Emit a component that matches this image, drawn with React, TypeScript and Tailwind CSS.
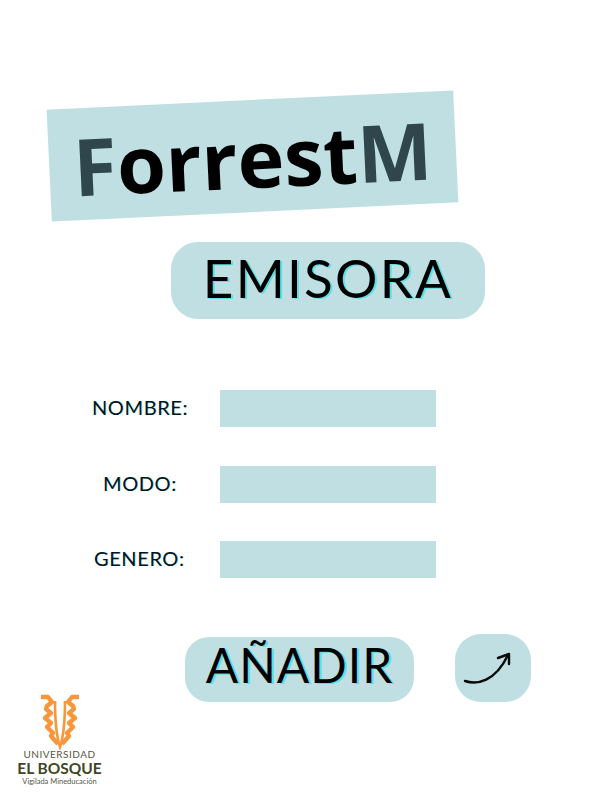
const sans = "font-['Lato','Liberation_Sans',sans-serif]";

function Field({ label, offset }: { label: string; offset: string }) {
  return (
    <div className="flex items-center">
      <div className={`w-[220px] pb-[4px] text-[20px] leading-none tracking-[0.6px] text-[#04141c] [text-shadow:0.5px_0_0_#7fe3e8] ${offset} ${sans}`}>
        {label}
      </div>
      <div className="h-[37px] w-[216px] bg-[#bfdfe2]" />
    </div>
  );
}

function Logo() {
  return (
    <div className="ml-[17px] -mt-[8px] flex w-[85px] flex-col items-center">
      <svg width="44" height="56" viewBox="0 0 44 56" fill="none">
        <path d="M17 7 C17 28 19 44 22 53 C25 44 27 28 27 7" stroke="#f7963a" strokeWidth="2.6" />
        <path d="M3 3 L10 3 L14 8 L9 12 L8 15 L13 19 L7 24 L13 29 L9 33 L15 39 L13 42 L20 50" stroke="#f7963a" strokeWidth="4.4" strokeLinejoin="round" />
        <path d="M41 3 L34 3 L30 8 L35 12 L36 15 L31 19 L37 24 L31 29 L35 33 L29 39 L31 42 L24 50" stroke="#f7963a" strokeWidth="4.4" strokeLinejoin="round" />
      </svg>
      <div className="mt-[-1px] text-[10px] leading-[11px] tracking-[0.5px] text-[#55583f] font-['Lato',sans-serif]">UNIVERSIDAD</div>
      <div className="whitespace-nowrap text-[15.5px] font-bold leading-[16px] text-[#3f4526] font-['Lato',sans-serif]">EL BOSQUE</div>
      <div className="mt-[2px] whitespace-nowrap text-[7.5px] leading-[8px] text-[#55583f] font-['Lato',sans-serif]">Vigilada Mineducación</div>
    </div>
  );
}

export default function App() {
  return (
    <div className="h-[800px] w-[600px] overflow-hidden bg-white pt-[100px]">
      <div className="ml-[49px] flex h-[112px] w-[407px] -rotate-[2.7deg] items-center justify-center bg-[#bfdfe2] pt-[2px] font-['Open_Sans',sans-serif] text-[79px] font-bold leading-none text-black">
        <span className="text-[#2e464c]">F</span>orrest<span className="text-[#2e464c]">M</span>
      </div>

      <div className={`ml-[171px] mt-[30px] flex h-[77px] w-[314px] items-center justify-center rounded-[27px] bg-[#bfdfe2] pb-[6px] text-[53px] leading-none tracking-[2.2px] text-black [text-shadow:2px_1px_0_#5ce1e6] ${sans}`}>
        EMISORA
      </div>

      <div className="mt-[71px] flex flex-col">
        <Field label="NOMBRE:" offset="pl-[92px]" />
        <div className="h-[39px]" />
        <Field label="MODO:" offset="pl-[103px]" />
        <div className="h-[38px]" />
        <Field label="GENERO:" offset="pl-[94px]" />
      </div>

      <div className="ml-[185px] mt-[56px] flex items-end">
        <div className={`flex h-[65px] w-[229px] items-center justify-center rounded-[24px] bg-[#bfdfe2] pb-[10px] text-[48px] leading-none tracking-[1px] text-black [text-shadow:2px_1px_0_#5ce1e6] ${sans}`}>
          AÑADIR
        </div>
        <div className="ml-[41px] h-[68px] w-[76px] rounded-[26px] bg-[#bfdfe2]">
          <svg width="76" height="68" viewBox="0 0 76 68" fill="none" stroke="#0a0a0a" strokeLinecap="round" strokeLinejoin="round">
            <path d="M10 47 C22 51 40 48 53 21" strokeWidth="2.4" />
            <path d="M43 24 L54 20 L54 30" strokeWidth="2.4" />
          </svg>
        </div>
      </div>

      <Logo />
    </div>
  );
}
